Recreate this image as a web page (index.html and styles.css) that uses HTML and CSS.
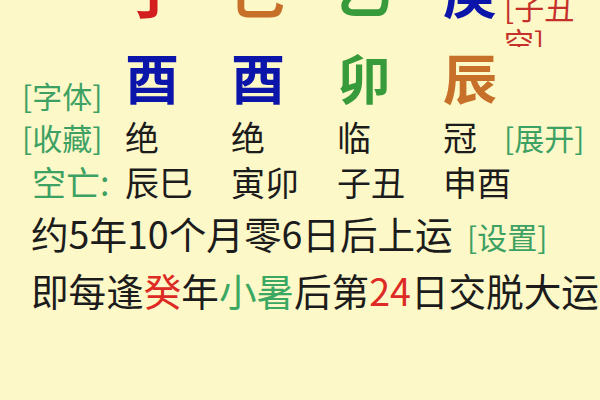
FILE: index.html
```html
<!DOCTYPE html>
<html lang="zh">
<head>
<meta charset="utf-8">
<link rel="stylesheet" href="styles.css">
</head>
<body>
<div class="page">
  <div class="row stems">
    <span class="cell"></span>
    <span class="cell big red">丁</span>
    <span class="cell big orange">巳</span>
    <span class="cell big green">乙</span>
    <span class="cell big blue">庚</span>
    <span class="cell kong">[子丑空]</span>
  </div>
  <div class="row branches">
    <span class="cell label end">[字体]</span>
    <span class="cell big blue">酉</span>
    <span class="cell big blue">酉</span>
    <span class="cell big green">卯</span>
    <span class="cell big orange">辰</span>
  </div>
  <div class="row small">
    <span class="cell label">[收藏]</span>
    <span class="cell">绝</span>
    <span class="cell">绝</span>
    <span class="cell">临</span>
    <span class="cell">冠</span>
    <span class="cell label">[展开]</span>
  </div>
  <div class="row small">
    <span class="cell kongwang">空亡:</span>
    <span class="cell">辰巳</span>
    <span class="cell">寅卯</span>
    <span class="cell">子丑</span>
    <span class="cell">申酉</span>
  </div>
  <p class="line first">约5年10个月零6日后上运 <span class="link">[设置]</span></p>
  <p class="line">即每逢<span class="hl-red">癸</span>年<span class="hl-green">小暑</span>后第<span class="hl-red">24</span>日交脱大运,</p>
</div>
</body>
</html>
```

FILE: styles.css
```css
html, body {
  margin: 0;
  padding: 0;
  background: #fdf8c8;
}
body {
  width: 600px;
  height: 400px;
  overflow: hidden;
  font-family: "Noto Sans CJK SC", "Noto Sans", sans-serif;
  color: #1c1c1c;
}
.page {
  width: 600px;
  height: 400px;
  overflow: hidden;
  padding-left: 22px;
  box-sizing: border-box;
}
.row {
  display: grid;
  grid-template-columns: 103px 106px 106px 106px 61px 1fr;
  white-space: nowrap;
}
.cell { display: block; }
.big {
  font-size: 54px;
  font-weight: 700;
  line-height: 60px;
  align-self: start;
}
.stems {
  margin-top: -35px;
  height: 52px;
}
.stems .big { line-height: 52px; }
.kong {
  align-self: start;
  margin-top: 24px;
  width: 74px;
  height: 58px;
  overflow: hidden;
  white-space: normal;
  font-size: 30px;
  line-height: 35px;
  color: #c5302a;
}
.branches {
  margin-top: 30px;
  height: 66px;
}
.label {
  font-size: 30px;
  color: #3da163;
  line-height: 40px;
}
.end {
  align-self: end;
  line-height: 36px;
}
.small {
  font-size: 34px;
  line-height: 40px;
}
.branches + .small { margin-top: 4px; }
.small + .small { margin-top: 5px; }
.kongwang {
  color: #3da163;
  padding-left: 10px;
}
.red { color: #d21e1e; }
.orange { color: #c6702a; }
.green { color: #379b3b; }
.blue { color: #0b15aa; }
.line {
  margin: 0;
  padding-left: 9px;
  font-size: 37.6px;
  line-height: 54px;
  white-space: nowrap;
}
.line.first { margin-top: 4px; }
.link {
  font-size: 30px;
  color: #3da163;
  margin-left: 6px;
}
.hl-red { color: #de2a24; }
.hl-green { color: #3aa862; }
```
